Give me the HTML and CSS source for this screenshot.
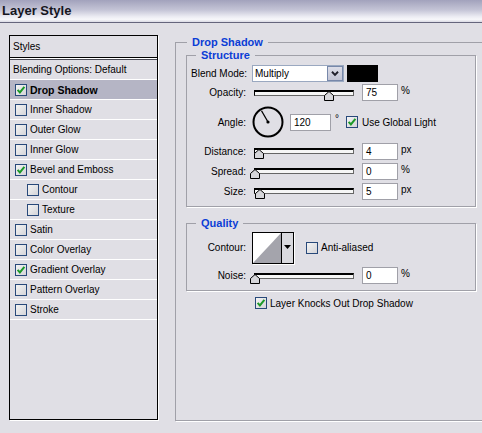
FILE: index.html
```html
<!DOCTYPE html>
<html lang="en">
<head>
    <meta charset="UTF-8">
    <title>Layer Style</title>
    <link rel="stylesheet" href="styles.css">
</head>
<body>

    <div class="titlebar">Layer Style</div>

    <div class="dialog">
        <!-- Left column: list of effects -->
        <div class="styles-panel">
            <div class="styles-head">Styles</div>
            <ul class="styles-list">
                <li class="style-item plain">Blending Options: Default</li>
                <li class="style-item is-selected"><span class="check"><svg viewBox="0 0 10 10"><path d="M1.6 4.8 L3.9 7.4 L8.4 1.8"/></svg></span>Drop Shadow</li>
                <li class="style-item"><span class="check"></span>Inner Shadow</li>
                <li class="style-item"><span class="check"></span>Outer Glow</li>
                <li class="style-item"><span class="check"></span>Inner Glow</li>
                <li class="style-item"><span class="check"><svg viewBox="0 0 10 10"><path d="M1.6 4.8 L3.9 7.4 L8.4 1.8"/></svg></span>Bevel and Emboss</li>
                <li class="style-item sub"><span class="check"></span>Contour</li>
                <li class="style-item sub"><span class="check"></span>Texture</li>
                <li class="style-item"><span class="check"></span>Satin</li>
                <li class="style-item"><span class="check"></span>Color Overlay</li>
                <li class="style-item"><span class="check"><svg viewBox="0 0 10 10"><path d="M1.6 4.8 L3.9 7.4 L8.4 1.8"/></svg></span>Gradient Overlay</li>
                <li class="style-item"><span class="check"></span>Pattern Overlay</li>
                <li class="style-item"><span class="check"></span>Stroke</li>
            </ul>
        </div>

        <!-- Right column: settings of the selected effect -->
        <fieldset class="group group-main">
            <legend>Drop Shadow</legend>

            <fieldset class="group group-sub structure">
                <legend>Structure</legend>

                <div class="row row-blend">
                    <span class="row-label">Blend Mode:</span>
                    <div class="select">
                        <span class="select-value">Multiply</span>
                        <span class="select-btn"><svg viewBox="0 0 16 15"><path d="M4.5 5.5 L8 9 L11.5 5.5"/></svg></span>
                    </div>
                    <span class="swatch"></span>
                </div>

                <div class="row row-slider">
                    <span class="row-label">Opacity:</span>
                    <div class="slider"><div class="track"><span class="thumb" style="left: 75%"><svg viewBox="0 0 10 10"><polygon points="0.5,9.5 0.5,4.5 5,0.5 9.5,4.5 9.5,9.5"/></svg></span></div></div>
                    <span class="num">75</span>
                    <span class="unit">%</span>
                </div>

                <div class="row row-angle">
                    <span class="row-label">Angle:</span>
                    <svg class="dial" viewBox="0 0 32 32">
                        <circle cx="16" cy="16" r="14.5"/>
                        <line x1="16" y1="16" x2="9.5" y2="4.7"/>
                        <circle class="dial-dot" cx="16" cy="16" r="1.6"/>
                    </svg>
                    <span class="num num-wide">120</span>
                    <span class="unit deg">°</span>
                    <span class="check global"><svg viewBox="0 0 10 10"><path d="M1.6 4.8 L3.9 7.4 L8.4 1.8"/></svg></span>
                    <span class="check-label wide">Use Global Light</span>
                </div>

                <div class="row row-slider row-short">
                    <span class="row-label">Distance:</span>
                    <div class="slider"><div class="track"><span class="thumb" style="left: 4.5%"><svg viewBox="0 0 10 10"><polygon points="0.5,9.5 0.5,4.5 5,0.5 9.5,4.5 9.5,9.5"/></svg></span></div></div>
                    <span class="num">4</span>
                    <span class="unit">px</span>
                </div>

                <div class="row row-slider row-short">
                    <span class="row-label">Spread:</span>
                    <div class="slider"><div class="track"><span class="thumb" style="left: 0%"><svg viewBox="0 0 10 10"><polygon points="0.5,9.5 0.5,4.5 5,0.5 9.5,4.5 9.5,9.5"/></svg></span></div></div>
                    <span class="num">0</span>
                    <span class="unit">%</span>
                </div>

                <div class="row row-slider row-short">
                    <span class="row-label">Size:</span>
                    <div class="slider"><div class="track"><span class="thumb" style="left: 5%"><svg viewBox="0 0 10 10"><polygon points="0.5,9.5 0.5,4.5 5,0.5 9.5,4.5 9.5,9.5"/></svg></span></div></div>
                    <span class="num">5</span>
                    <span class="unit">px</span>
                </div>
            </fieldset>

            <fieldset class="group group-sub quality">
                <legend>Quality</legend>

                <div class="row row-contour">
                    <span class="row-label">Contour:</span>
                    <div class="contour">
                        <svg class="contour-preview" viewBox="0 0 28 30" preserveAspectRatio="none">
                            <rect width="28" height="30" fill="#fff"/>
                            <polygon points="0,30 28,0 28,30" fill="#a4a4ac"/>
                        </svg>
                        <span class="contour-btn"><svg viewBox="0 0 7 4"><polygon points="0,0 7,0 3.5,4"/></svg></span>
                    </div>
                    <span class="check aa"></span>
                    <span class="check-label">Anti-aliased</span>
                </div>

                <div class="row row-slider">
                    <span class="row-label">Noise:</span>
                    <div class="slider"><div class="track"><span class="thumb" style="left: 0%"><svg viewBox="0 0 10 10"><polygon points="0.5,9.5 0.5,4.5 5,0.5 9.5,4.5 9.5,9.5"/></svg></span></div></div>
                    <span class="num">0</span>
                    <span class="unit">%</span>
                </div>
            </fieldset>

            <div class="knockout">
                <span class="check"><svg viewBox="0 0 10 10"><path d="M1.6 4.8 L3.9 7.4 L8.4 1.8"/></svg></span>
                <span class="check-label">Layer Knocks Out Drop Shadow</span>
            </div>
        </fieldset>
    </div>

</body>
</html>
```

FILE: styles.css
```css
/* Basic reset, window is a fixed 482x433 dialog crop */
html, body {
    margin: 0;
    padding: 0;
    width: 100%;
    height: 100%;
    overflow: hidden;
}

body {
    background: #e0dfe5;
    font-family: "Liberation Sans", Arial, sans-serif;
    font-size: 10px;
    color: #000;
}

/* Window title */
.titlebar {
    height: 22px;
    line-height: 22px;
    padding-left: 2px;
    font-size: 13px;
    font-weight: bold;
    color: #16161e;
    border-bottom: 1px solid #65657c;
    background: linear-gradient(to bottom, #a2a2bc 0%, #c4c4d6 45%, #ebebf2 75%, #f7f7fa 88%, #dadae4 100%);
}

.dialog {
    display: flex;
    align-items: flex-start;
    padding: 12px 0 0 9px;
}

/* ---------- Styles list ---------- */
.styles-panel {
    flex: none;
    width: 149px;
    height: 385px;
    box-sizing: border-box;
    border: 1px solid #000;
    box-shadow: 1px 1px 0 #fff;
}

.styles-head {
    height: 21px;
    line-height: 21px;
    padding-left: 3px;
    border-bottom: 1px solid #000;
    box-shadow: 0 1px 0 #fff;
}

.styles-list {
    list-style: none;
    margin: 1px 0 0;
    padding: 0;
    border-top: 1px solid #4a4a55;
}

.style-item {
    display: flex;
    align-items: center;
    gap: 2px;
    height: 19px;
    padding-left: 5px;
    border-bottom: 1px solid #fff;
}

.style-item.plain {
    padding-left: 3px;
}

.style-item.sub {
    padding-left: 17px;
}

.style-item.is-selected {
    background: #b5b5c5;
    font-weight: bold;
    font-size: 10.5px;
}

/* Checkbox with the green tick */
.check {
    flex: none;
    display: inline-block;
    width: 12px;
    height: 12px;
    box-sizing: border-box;
    border: 1px solid #28497a;
    background: linear-gradient(135deg, #f4f4f4 0%, #d4d4d8 100%);
    margin-right: 1px;
}

.check svg {
    display: block;
    width: 10px;
    height: 10px;
}

.check path {
    fill: none;
    stroke: #1d9a29;
    stroke-width: 2;
}

.check-label {
    margin-left: 2px;
}

.check-label.wide {
    margin-left: 3px;
}

/* ---------- Group boxes ---------- */
.group {
    margin: 0;
    border: 1px solid #a0a0a8;
    box-shadow: 1px 1px 0 #fff;
    min-inline-size: 0;
}

.group legend {
    padding: 0 5px;
    font-size: 11px;
    line-height: 13px;
    font-weight: bold;
    color: #0b3dd6;
}

/* The outer box runs off the right edge of the crop, so no right border */
.group-main {
    flex: 1;
    height: 385px;
    box-sizing: border-box;
    margin: 1px 0 0 17px;
    padding: 0 0 0 10px;
    border-right: none;
}

.group-main > legend {
    margin-left: 1px;
}

.group-sub {
    width: 290px;
    box-sizing: border-box;
    padding: 3px 0 5px 4px;
}

.group-sub > legend {
    margin-left: 5px;
}

.quality {
    margin-top: 10px;
    padding: 0 0 4px 4px;
}

/* ---------- Rows ---------- */
.row {
    display: flex;
    align-items: center;
}

.row-label {
    flex: none;
    width: 55px;
    margin-right: 6px;
    text-align: right;
    white-space: nowrap;
}

.row-blend { height: 17px; }
.row-slider { height: 21px; }
.row-short { height: 20px; }
.row-angle { height: 38px; }
.row-contour { height: 35px; }

/* Blend mode dropdown */
.select {
    display: flex;
    width: 92px;
    height: 17px;
    box-sizing: border-box;
    border: 1px solid #9aa8c0;
    background: #fff;
}

.select-value {
    flex: 1;
    padding-left: 2px;
    line-height: 15px;
}

.select-btn {
    width: 16px;
    box-sizing: border-box;
    border: 1px solid #7788aa;
    background: linear-gradient(to bottom, #dcdde8, #c2c4d4);
}

.select-btn svg {
    display: block;
    width: 14px;
    height: 13px;
}

.select-btn path {
    fill: none;
    stroke: #1e1e2a;
    stroke-width: 2.2;
}

.swatch {
    width: 31px;
    height: 17px;
    margin-left: 3px;
    background: #000;
}

/* Slider */
.slider {
    flex: none;
    width: 104px;
    margin-right: 6px;
}

.track {
    position: relative;
    height: 6px;
    margin: 0 2px;
    box-sizing: border-box;
    border: 1px solid #666;
    border-top: 2px solid #000;
    border-left-color: #000;
    background: #f6f6f6;
}

.thumb {
    position: absolute;
    top: -1px;
    width: 10px;
    height: 10px;
    margin-left: -5px;
}

.thumb svg {
    display: block;
    width: 10px;
    height: 10px;
}

.thumb polygon {
    fill: #d6d6da;
    stroke: #000;
    stroke-width: 1;
}

/* Number fields */
.num {
    flex: none;
    width: 36px;
    height: 17px;
    box-sizing: border-box;
    padding-left: 3px;
    line-height: 15px;
    border: 1px solid #a0a0a8;
    background: #fff;
}

.num-wide {
    width: 41px;
}

.unit {
    margin-left: 3px;
    margin-bottom: 4px;
}

.unit.deg {
    margin-left: 4px;
    margin-bottom: 8px;
}

/* Angle dial */
.dial {
    flex: none;
    width: 32px;
    height: 32px;
    margin-right: 6px;
}

.dial circle {
    fill: none;
    stroke: #000;
    stroke-width: 2;
}

.dial line {
    stroke: #000;
    stroke-width: 1.3;
}

.dial .dial-dot {
    fill: #000;
    stroke: none;
}

.check.global {
    margin-left: 7px;
}

/* Contour picker */
.contour {
    display: flex;
    width: 42px;
    height: 32px;
    box-sizing: border-box;
    border: 1px solid #000;
    box-shadow: 1px 1px 0 #fff;
}

.contour-preview {
    display: block;
    width: 28px;
    height: 30px;
}

.contour-btn {
    flex: 1;
    display: flex;
    align-items: center;
    justify-content: center;
    padding-bottom: 2px;
    border-left: 1px solid #000;
    background: #d9d9de;
}

.contour-btn svg {
    width: 7px;
    height: 4px;
}

.check.aa {
    margin-left: 12px;
}

/* Knockout option */
.knockout {
    display: flex;
    align-items: center;
    height: 12px;
    margin: 6px 0 0 69px;
}
```
